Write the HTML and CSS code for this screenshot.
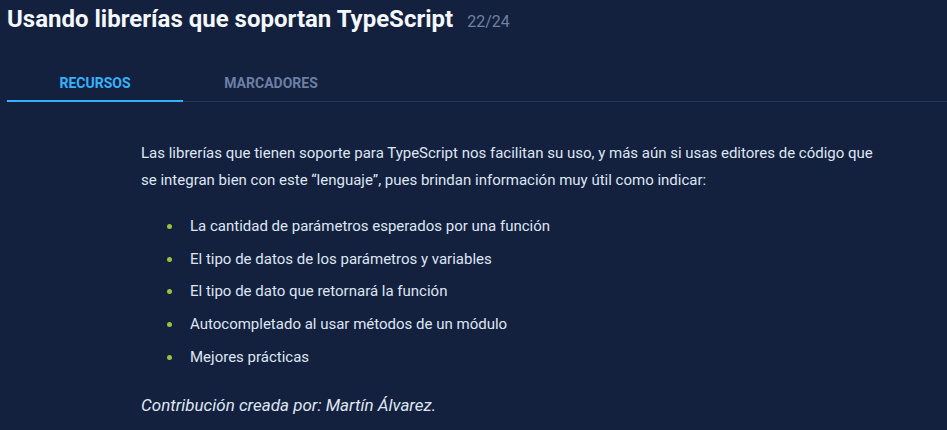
FILE: index.html
```html
<!DOCTYPE html>
<html lang="es">
<head>
<meta charset="utf-8">
<link rel="stylesheet" href="styles.css">
</head>
<body>
<header class="head">
  <h1 class="title">Usando librerías que soportan TypeScript</h1>
  <span class="count">22/24</span>
</header>
<nav class="tabs">
  <div class="tab active">RECURSOS</div>
  <div class="tab">MARCADORES</div>
</nav>
<main class="content">
  <p class="intro">Las librerías que tienen soporte para TypeScript nos facilitan su uso, y más aún si usas editores de código que se integran bien con este “lenguaje”, pues brindan información muy útil como indicar:</p>
  <ul class="list">
    <li>La cantidad de parámetros esperados por una función</li>
    <li>El tipo de datos de los parámetros y variables</li>
    <li>El tipo de dato que retornará la función</li>
    <li>Autocompletado al usar métodos de un módulo</li>
    <li>Mejores prácticas</li>
  </ul>
  <p class="credit"><em>Contribución creada por: Martín Álvarez.</em></p>
</main>
</body>
</html>
```
FILE: styles.css
```css
html, body {
  margin: 0;
  padding: 0;
  background: #13203e;
  font-family: Roboto, "Noto Sans", sans-serif;
  color: #dfe6f3;
}
.head {
  display: flex;
  align-items: baseline;
  padding: 4px 0 0 7px;
  height: 36px;
}
.title {
  margin: 0;
  font-size: 24px;
  font-weight: 700;
  color: #f4f7fc;
  line-height: 30px;
}
.count {
  margin-left: 14px;
  font-size: 16px;
  color: #6e80a4;
}
.tabs {
  display: flex;
  margin: 27px 0 0 7px;
  border-bottom: 1px solid #24365c;
}
.tab {
  width: 176px;
  text-align: center;
  font-size: 14px;
  font-weight: 700;
  color: #6c7fa3;
  padding: 8px 0 9px;
  line-height: 16px;
}
.tab.active {
  color: #33b3ff;
  border-bottom: 2px solid #33b3ff;
  margin-bottom: -1px;
}
.content {
  padding: 38px 0 0 141px;
  width: 745px;
  font-size: 15px;
}
.intro {
  margin: 0;
  line-height: 27px;
}
.list {
  margin: 22px 0 0;
  padding: 0 0 0 49px;
  list-style: none;
}
.list li {
  position: relative;
  line-height: 20px;
  margin-bottom: 12.7px;
}
.list li::before {
  content: "";
  position: absolute;
  left: -23px;
  top: 8px;
  width: 5px;
  height: 5px;
  border-radius: 50%;
  background: #9ac23c;
}
.credit {
  margin: 28px 0 0;
  font-size: 17px;
  line-height: 20px;
}
```
